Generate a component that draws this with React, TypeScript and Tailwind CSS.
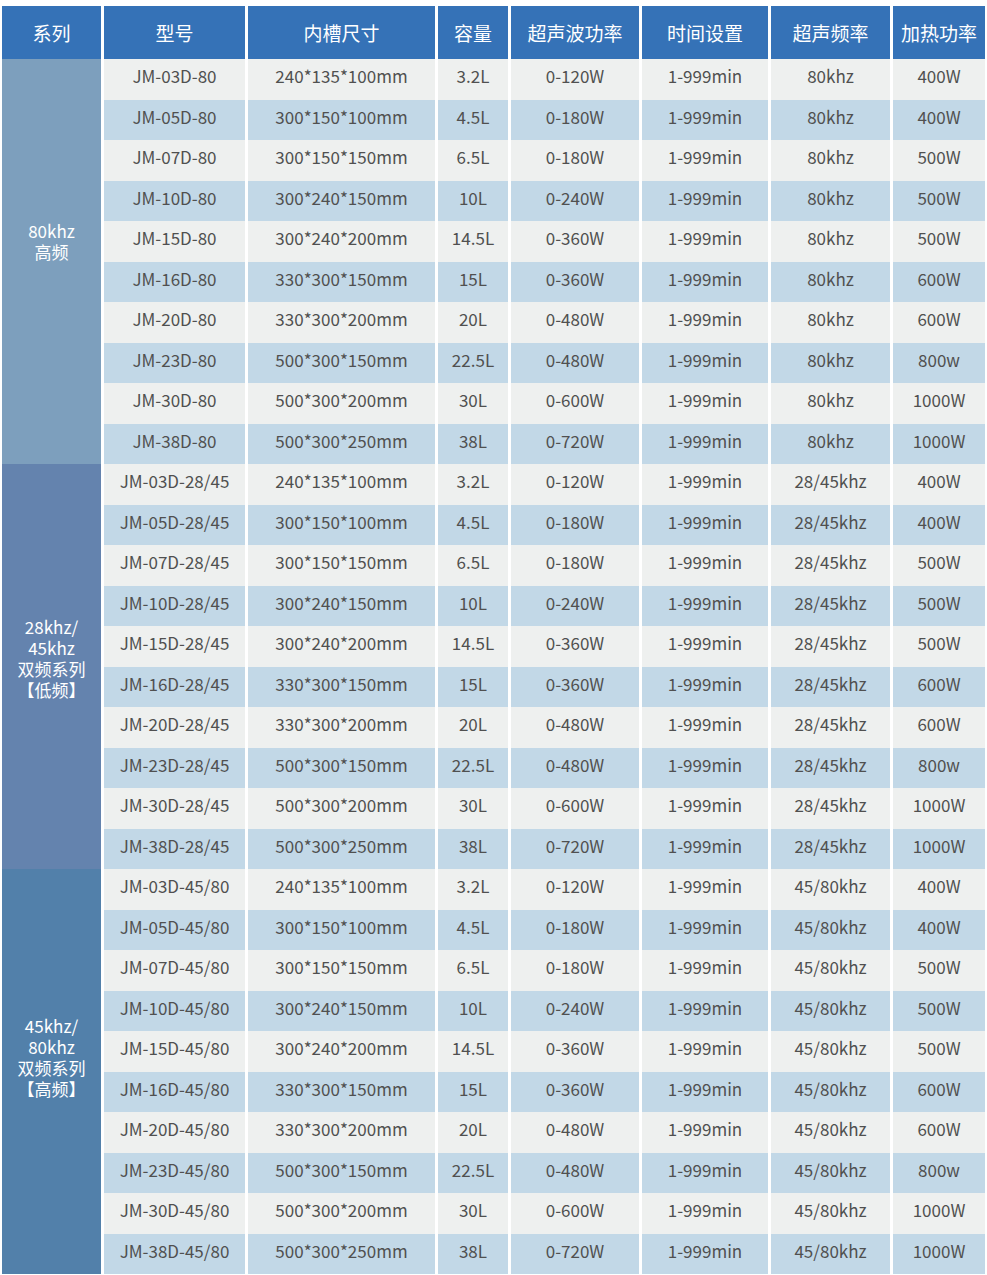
import React from "react";

const headers = ["系列", "型号", "内槽尺寸", "容量", "超声波功率", "时间设置", "超声频率", "加热功率"];

const base = [
  ["03D", "240*135*100mm", "3.2L", "0-120W", "400W"],
  ["05D", "300*150*100mm", "4.5L", "0-180W", "400W"],
  ["07D", "300*150*150mm", "6.5L", "0-180W", "500W"],
  ["10D", "300*240*150mm", "10L", "0-240W", "500W"],
  ["15D", "300*240*200mm", "14.5L", "0-360W", "500W"],
  ["16D", "330*300*150mm", "15L", "0-360W", "600W"],
  ["20D", "330*300*200mm", "20L", "0-480W", "600W"],
  ["23D", "500*300*150mm", "22.5L", "0-480W", "800w"],
  ["30D", "500*300*200mm", "30L", "0-600W", "1000W"],
  ["38D", "500*300*250mm", "38L", "0-720W", "1000W"],
];

const groups = [
  { suffix: "80", freq: "80khz", label: ["80khz", "高频"], bg: "bg-[#7d9fbd]", pad: "pb-[42px]" },
  { suffix: "28/45", freq: "28/45khz", label: ["28khz/", "45khz", "双频系列", "【低频】"], bg: "bg-[#6483ae]", pad: "pb-[18px]" },
  { suffix: "45/80", freq: "45/80khz", label: ["45khz/", "80khz", "双频系列", "【高频】"], bg: "bg-[#5280aa]", pad: "pb-[30px]" },
];

const rowStarts = ["row-start-2", "row-start-12", "row-start-22"];

export default function App() {
  const cells: React.ReactNode[] = [];
  groups.forEach((g, gi) => {
    cells.push(
      <div
        key={"g" + gi}
        className={`col-start-1 ${rowStarts[gi]} row-span-10 ${g.bg} ${g.pad} flex flex-col items-center justify-center text-white text-[17px] leading-[21px]`}
      >
        {g.label.map((l, i) => (
          <div key={i}>{l}</div>
        ))}
      </div>
    );
    base.forEach((r, ri) => {
      const bg = ri % 2 === 0 ? "bg-[#eef0ef]" : "bg-[#c2d8e7]";
      const vals = [`JM-${r[0]}-${g.suffix}`, r[1], r[2], r[3], "1-999min", g.freq, r[4]];
      vals.forEach((v, ci) => {
        cells.push(
          <div
            key={`${gi}-${ri}-${ci}`}
            className={`${bg} flex items-center justify-center pb-[7px] text-[17px] text-[#505050]`}
          >
            {v}
          </div>
        );
      });
    });
  });

  return (
    <div
      className="w-[987px] h-[1275px] bg-white pt-[6px] pl-[2px]"
      style={{ fontFamily: '"Noto Sans CJK SC", "Noto Sans", sans-serif' }}
    >
      <div className="grid grid-cols-[99px_141px_187px_70px_128px_126px_119px_92px] grid-rows-[53px_repeat(30,40.5px)] gap-x-[3px] grid-flow-row-dense">
        {headers.map((h) => (
          <div
            key={h}
            className="bg-[#3572b7] text-white text-[19px] flex items-center justify-center pt-[2px]"
          >
            {h}
          </div>
        ))}
        {cells}
      </div>
    </div>
  );
}
